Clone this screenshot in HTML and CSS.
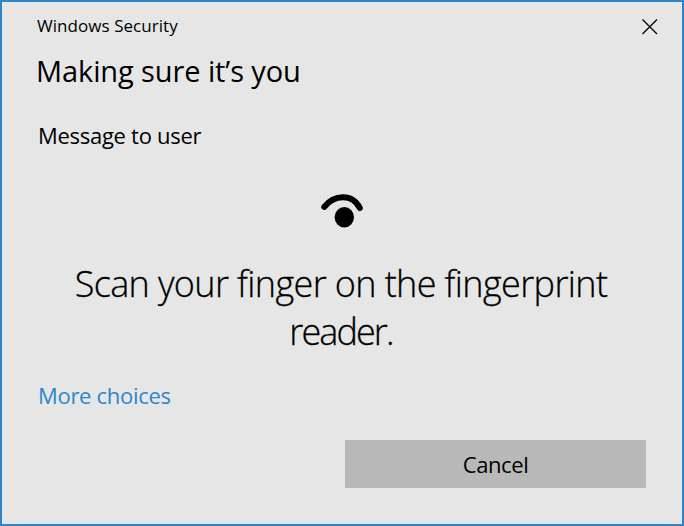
FILE: index.html
```html
<!DOCTYPE html>
<html lang="en">
<head>
<meta charset="utf-8">
<title>Windows Security</title>
<link rel="stylesheet" href="styles.css">
</head>
<body>
<main class="dialog">
  <header class="titlebar">
    <span class="caption">Windows Security</span>
    <button class="close" aria-label="Close"><svg width="16" height="16" viewBox="0 0 16 16"><path d="M.5.5 15 15M15 .5.5 15"/></svg></button>
  </header>
  <h1>Making sure it’s you</h1>
  <p class="message">Message to user</p>
  <svg class="eye" width="44" height="36" viewBox="0 0 44 36"><path d="M4.3 14.8C14 2.5 32.5 1 39.8 16"/><ellipse cx="24.3" cy="25.2" rx="9.7" ry="10.3"/></svg>
  <p class="prompt">Scan your finger on the fingerprint<br><span class="last-word">reader.</span></p>
  <a class="choices">More choices</a>
  <button class="cancel">Cancel</button>
</main>
</body>
</html>
```
FILE: styles.css
```css
* { box-sizing: border-box; }
body { margin: 0; font-family: "Segoe UI", "Open Sans", sans-serif; color: #000; font-size: 22px; line-height: 32px; }
h1, p { margin: 0; }
button { border: 0; padding: 0; background: none; font: inherit; color: inherit; }
svg { display: block; }
.dialog { width: 684px; height: 526px; border: 2px solid #2b86ce; background: #e6e6e6; display: flex; flex-direction: column; align-items: flex-start; padding: 12px 24px 0 34px; white-space: nowrap; }
.titlebar { display: flex; justify-content: space-between; align-self: stretch; height: 37px; }
.caption { font-size: 17px; line-height: 24px; letter-spacing: 0.05px; margin-left: 1px; }
.close { width: 16px; height: 16px; margin-top: 5px; }
.close path { fill: none; stroke: #000; stroke-width: 1.25; }
h1 { height: 68px; font-size: 29px; font-weight: 400; line-height: 39px; letter-spacing: -0.1px; }
.message { height: 73px; padding-left: 2px; line-height: 33px; letter-spacing: -0.28px; }
.eye { margin-left: 284px; }
.eye path { fill: none; stroke: #000; stroke-width: 6; stroke-linecap: round; }
.prompt { align-self: stretch; height: 130px; margin: 32px 12px 0 0; font-size: 36px; font-weight: 300; line-height: 48px; letter-spacing: -0.62px; text-align: center; -webkit-text-stroke: 0.3px #000; }
.last-word { letter-spacing: -1.9px; }
.choices { margin: -11px 0 0 2px; color: #2b86ce; letter-spacing: -0.3px; }
.cancel { width: 301px; height: 48px; margin: 29px 0 0 309px; padding-bottom: 1px; background: #b8b8b8; letter-spacing: -0.4px; }
```
